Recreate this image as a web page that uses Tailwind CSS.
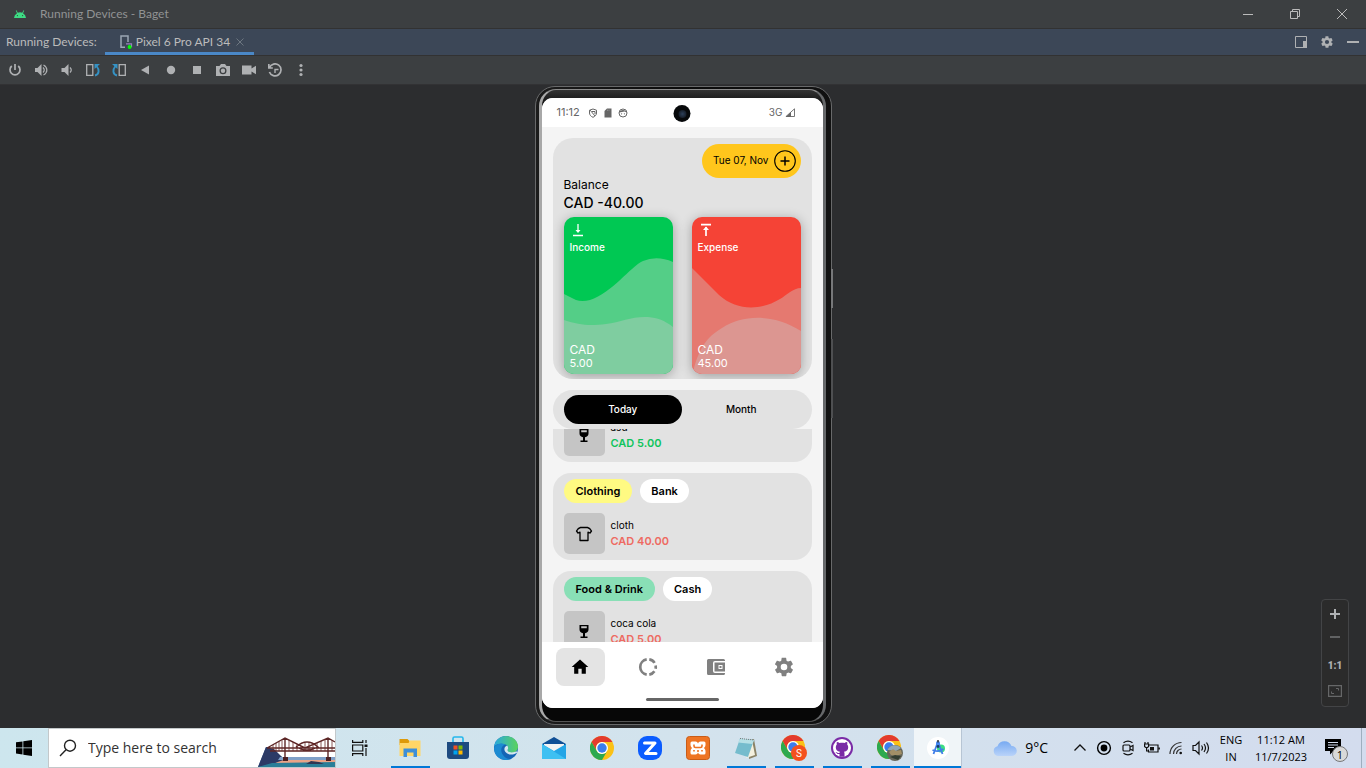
<!DOCTYPE html>
<html lang="en">
<head>
<meta charset="utf-8">
<meta name="viewport" content="width=device-width, initial-scale=1">
<title>Running Devices - Baget</title>
<script src="https://cdn.jsdelivr.net/npm/@tailwindcss/browser@4"></script>
</head>
<body class="flex h-screen flex-col overflow-hidden bg-[#2c2d2f] font-['Lato',sans-serif] text-xs text-[#bbbbbb]">

<svg class="hidden" aria-hidden="true">
  <symbol id="chrome" viewBox="0 0 24 24">
    <circle cx="12" cy="12" r="12" fill="#fbc116"/>
    <path d="M1.600 6A12 12 0 0 1 22.400 6H12a6 6 0 0 0-5.200 9z" fill="#e33b2e"/>
    <path d="M1.600 6A12 12 0 0 0 12 24l5.200-9A6 6 0 0 1 6.800 15z" fill="#2da94f"/>
    <circle cx="12" cy="12" r="6" fill="#fff"/>
    <circle cx="12" cy="12" r="4.700" fill="#3b7ded"/>
  </symbol>
  <symbol id="gear" viewBox="0 0 24 24">
    <path d="M19.400 13c0-.3.1-.6.1-1s0-.7-.1-1l2.100-1.600c.2-.2.3-.4.1-.6l-2-3.500c-.1-.2-.4-.3-.6-.2l-2.500 1c-.5-.4-1.100-.7-1.700-1l-.4-2.700c0-.2-.2-.4-.5-.4h-4c-.2 0-.5.2-.5.4l-.4 2.700c-.6.3-1.200.6-1.700 1l-2.500-1c-.2-.1-.5 0-.6.2l-2 3.500c-.1.2-.1.5.1.6L4.500 11c0 .3-.1.700-.1 1s0 .7.1 1l-2.100 1.600c-.2.2-.3.400-.1.600l2 3.500c.1.200.4.300.6.200l2.500-1c.5.400 1.100.700 1.700 1l.4 2.700c0 .2.3.4.5.4h4c.3 0 .5-.2.5-.4l.4-2.700c.6-.3 1.200-.6 1.700-1l2.500 1c.2.1.5 0 .6-.2l2-3.500c.1-.2.1-.5-.1-.6zM12 15.600a3.600 3.600 0 1 1 0-7.200 3.600 3.600 0 0 1 0 7.200z"/>
  </symbol>
  <symbol id="wine" viewBox="0 0 12 14">
    <path fill-rule="evenodd" d="M1.500 0h9v4.500c0 2-1.500 3.500-3.500 3.800V11.500h2.500V13h-7v-1.500H5V8.300c-2-.3-3.500-1.800-3.500-3.800zM3.200 1.300v2h5.600v-2z"/>
  </symbol>
</svg>

<header class="flex h-[29px] shrink-0 items-center border-b border-[#323232] bg-[#3c3f41] pr-px">
  <svg class="ml-[14px] h-3 w-3" viewBox="0 0 12 12"><path d="M0 10a6 6 0 0 1 3-4.800L1.800 2.500l.6-.3L3.800 4.800a6 6 0 0 1 4.400 0l1.400-2.600.6.300L9 5.200A6 6 0 0 1 12 10z" fill="#3ddc84"/><circle cx="3.400" cy="7.600" r=".6" fill="#31473a"/><circle cx="8.600" cy="7.600" r=".6" fill="#31473a"/></svg>
  <h1 class="ml-[14px] text-[#919394]">Running Devices - Baget</h1>
  <div class="ml-auto flex h-full">
    <button class="grid w-[47px] place-items-center" aria-label="Minimize"><svg class="h-3 w-3" viewBox="0 0 12 12"><path d="M1 6.500h10" stroke="#bbb"/></svg></button>
    <button class="grid w-[47px] place-items-center" aria-label="Restore"><svg class="h-3 w-3" viewBox="0 0 12 12" fill="none" stroke="#bbb"><path d="M1.500 3.500h7v7h-7zM3.500 3.500v-2h7v7h-2"/></svg></button>
    <button class="grid w-[47px] place-items-center" aria-label="Close"><svg class="h-3 w-3" viewBox="0 0 12 12"><path d="M1 1l10 10M11 1L1 11" stroke="#bbb"/></svg></button>
  </div>
</header>

<div class="flex h-[27px] shrink-0 items-stretch border-b border-[#323232] bg-[#3c4757]">
  <span class="self-center pl-1.5">Running Devices:</span>
  <div class="ml-2 flex items-center border-b-[3px] border-[#4a88c7] pr-2.5 pl-[14px]">
    <svg class="mt-[3px] h-[14px] w-[14px]" viewBox="0 0 14 14" fill="none"><path d="M6 12.200H2V1h7v6" stroke="#9aa7b4" stroke-width="1.500"/><path d="M7 8.800h5.500v3.500" stroke="#9b7fc0" stroke-width="1.200"/><circle cx="10.600" cy="12" r="2" fill="#0f0"/></svg>
    <a href="#" class="mt-[3px] ml-[3px]">Pixel 6 Pro API 34</a>
    <button class="mt-[3px] ml-1.5" aria-label="Close tab"><svg class="h-2 w-2" viewBox="0 0 8 8"><path d="M.5.500l7 7M7.500.500l-7 7" stroke="#6d7781"/></svg></button>
  </div>
  <div class="ml-auto flex items-center gap-[13px] pr-[7px] text-[#afb1b3]">
    <button aria-label="Dock"><svg class="h-3 w-3" viewBox="0 0 12 12"><path d="M.5.500h11v11H.5z" fill="none" stroke="currentColor"/><path d="M8 5h4v7H8z" fill="currentColor"/></svg></button>
    <button aria-label="Options"><svg class="h-[14px] w-[14px] fill-current"><use href="#gear"/></svg></button>
    <button aria-label="Hide"><svg class="h-3 w-3" viewBox="0 0 12 12"><path d="M0 5h12v2H0z" fill="currentColor"/></svg></button>
  </div>
</div>

<div class="flex h-[29px] shrink-0 items-center gap-3 border-b border-[#323234] bg-[#3c3f41] pl-2 text-[#afb1b3]" role="toolbar">
  <button aria-label="Power"><svg class="h-[14px] w-[14px]" viewBox="0 0 14 14" fill="none" stroke="currentColor" stroke-width="1.700"><path d="M7 1v6M3.800 3a5 5 0 1 0 6.400 0"/></svg></button>
  <button aria-label="Volume up"><svg class="h-[14px] w-[14px]" viewBox="0 0 14 14"><path d="M1 5h2.500l4-4v12l-4-4H1z" fill="currentColor"/><path d="M9 4.500c1.500 1.500 1.500 3.500 0 5M9.500 2c4.500 2.500 4.500 7.500 0 10" fill="none" stroke="currentColor" stroke-width="1.200"/></svg></button>
  <button aria-label="Volume down"><svg class="h-[14px] w-[14px]" viewBox="0 0 14 14"><path d="M1.500 5h3l4-4v12l-4-4h-3z" fill="currentColor"/><path d="M10 4.500c1.500 1.500 1.500 3.500 0 5" fill="none" stroke="currentColor" stroke-width="1.200"/></svg></button>
  <button aria-label="Rotate left"><svg class="h-[14px] w-[14px]" viewBox="0 0 14 14" fill="none"><path d="M.7 1.700h6.100v10.600H.7z" stroke="currentColor" stroke-width="1.300"/><path d="M9 12.500c4.500-1 4.500-6 1.500-9.500" stroke="#3592c4" stroke-width="1.900"/><path d="M8.500 1H14L8.500 6z" fill="#3592c4"/></svg></button>
  <button aria-label="Rotate right"><svg class="h-[14px] w-[14px]" viewBox="0 0 14 14" fill="none"><path d="M7.200 1.700h6.100v10.600H7.200z" stroke="currentColor" stroke-width="1.300"/><path d="M5 12.500C.5 11.500.5 6.500 3.500 3" stroke="#3592c4" stroke-width="1.900"/><path d="M5.500 1H0l5.500 5z" fill="#3592c4"/></svg></button>
  <button aria-label="Back"><svg class="h-[14px] w-[14px]" viewBox="0 0 14 14" fill="currentColor"><path d="M11 2.500v9L3 7z"/></svg></button>
  <button aria-label="Home"><svg class="h-[14px] w-[14px]" viewBox="0 0 14 14" fill="currentColor"><circle cx="7" cy="7" r="4.200"/></svg></button>
  <button aria-label="Overview"><svg class="h-[14px] w-[14px]" viewBox="0 0 14 14" fill="currentColor"><path d="M3 3h8v8H3z"/></svg></button>
  <button aria-label="Screenshot"><svg class="h-[14px] w-[14px]" viewBox="0 0 14 14"><path fill-rule="evenodd" d="M0 3h3.500L5 1h4l1.500 2H14v10H0zM7 4.200a3.500 3.500 0 1 0 0 7 3.500 3.500 0 0 0 0-7z" fill="currentColor"/><circle cx="7" cy="7.700" r="2.200" fill="currentColor"/></svg></button>
  <button aria-label="Record"><svg class="h-[14px] w-[14px]" viewBox="0 0 14 14" fill="currentColor"><path d="M0 2.500h9.500v3L14 2.800v8.400L9.500 8.500v3H0z"/></svg></button>
  <button aria-label="Snapshots"><svg class="h-[14px] w-[14px]" viewBox="0 0 14 14" fill="none" stroke="currentColor" stroke-width="1.700"><path d="M.8 1v4h4M1.500 4.500A6 6 0 1 1 1.400 9"/><path d="M7 10V6.500h3.500" stroke-width="1.400"/></svg></button>
  <button aria-label="More"><svg class="h-[14px] w-[14px]" viewBox="0 0 14 14" fill="currentColor"><circle cx="7" cy="2.500" r="1.600"/><circle cx="7" cy="7" r="1.600"/><circle cx="7" cy="11.500" r="1.600"/></svg></button>
</div>

<main class="relative flex min-h-0 flex-1 justify-center pt-px pb-[3px]">
  <!-- Phone body -->
  <div class="relative flex w-[297px] flex-col rounded-[20px] border border-[#68696a] bg-linear-to-r from-[#1c1c1c] via-[#0b0b0b] to-[#111] pt-[2px] pr-[5px] pb-[2px] pl-[3px]">
    <span class="absolute top-[182px] -right-0.5 h-[39px] w-0.5 bg-[#77787a]"></span>
    <span class="absolute top-[252px] -right-0.5 h-[79px] w-0.5 bg-[#4e4f51]"></span>
    <div class="flex min-h-0 flex-1 flex-col rounded-[17px] border-t border-r-[3px] border-b border-l-[3px] border-t-[#8a8a8a] border-r-[#66686a] border-b-[#555] border-l-[#a8a8a8] bg-linear-to-b from-[#343434] to-[#070707] to-3% pt-2 pb-[13px]">
      <div class="flex min-h-0 flex-1 flex-col overflow-hidden rounded-[11px] bg-[#f4f4f4] font-['Inter',sans-serif] text-[10px] text-black">

        <div class="relative flex h-[29px] shrink-0 items-center bg-white pr-7 pl-[15px] text-[#666]">
          <span class="w-[29px] text-[11px]">11:12</span>
          <svg class="ml-0.5 h-[10px] w-[10px]" viewBox="0 0 10 10" fill="none" stroke="#666"><path d="M5 1l3.500 1.200V5c0 2-1.500 3.500-3.500 4.300C3 8.500 1.500 7 1.500 5V2.200zM2 2l5 6M4 3.500h3V6"/></svg>
          <svg class="ml-[5px] h-[10px] w-[10px]" viewBox="0 0 10 10"><path d="M4 .5h4.500v9h-7V3z" fill="#666"/><path d="M4.500 1.500v1.500M6 1.500v1.500" stroke="#999" stroke-width=".7"/></svg>
          <svg class="ml-[5px] h-[10px] w-[10px]" viewBox="0 0 10 10"><circle cx="5" cy="5" r="4" fill="none" stroke="#666"/><path d="M1 4.500C2 1 8 1 9 4.500L6.500 3.500 4 4z" fill="#666"/><circle cx="3.600" cy="5.800" r=".6" fill="#666"/><circle cx="6.400" cy="5.800" r=".6" fill="#666"/></svg>
          <span class="absolute top-[7px] left-1/2 grid h-[17px] w-[17px] -translate-x-1/2 place-items-center rounded-full bg-[#07090b]"><span class="h-2 w-2 rounded-full bg-radial from-[#2d405a] to-[#0d1117]"></span></span>
          <span class="ml-auto">3G</span>
          <svg class="ml-0.5 h-[9px] w-[10px]" viewBox="0 0 10 9"><path d="M9.500.800v7.700H1z" fill="none" stroke="#666" stroke-width=".9"/><path d="M6 4v5H.500z" fill="#666"/></svg>
        </div>

        <section class="mx-[11px] mt-[11px] flex shrink-0 flex-col overflow-hidden rounded-[20px] bg-[#e2e2e2] px-[11px] pt-1.5 pb-[5px]">
          <button class="flex h-[34px] items-center gap-[5px] self-end rounded-full bg-[#ffc61c] pr-[5px] pl-[11px]">Tue 07, Nov
            <svg class="h-[22px] w-[22px]" viewBox="0 0 22 22" fill="none" stroke="#000"><circle cx="11" cy="11" r="10.300" stroke-width="1.100"/><path d="M11 6.500v9M6.500 11h9" stroke-width="1.500"/></svg>
          </button>
          <p class="text-[12px] leading-[13px]">Balance</p>
          <p class="mt-[3px] mb-[6px] text-[14px] leading-[17px] font-medium">CAD -40.00</p>
          <div class="grid grid-cols-2 gap-[19px] text-white">
            <article class="relative isolate flex h-[157px] flex-col overflow-hidden rounded-[10px] bg-[#00c853] px-1.5 pt-1.5 pb-[5px] shadow-[0_2px_12px_rgba(0,0,0,0.3)]">
              <svg class="absolute inset-0 -z-10 h-full w-full" viewBox="0 0 109 157" preserveAspectRatio="none"><path d="M0 77l12 6q6 2 14 0C48 76 66 50 79 44q14-6 30 1v112H0z" fill="#54ce87"/><path d="M0 103c15 5 25 6 42 4 15-2 27-8 42-7 10 1 16 3 25 10v47H0z" fill="#7fcda0"/></svg>
              <svg class="ml-0.5 h-[14px] w-[12px]" viewBox="0 0 12 14"><path d="M6 1v8M1 12.500h10" stroke="#fff" stroke-width="1.300"/><path d="M3.500 7h5L6 10z" fill="#fff"/></svg>
              <h2 class="mt-[4px] text-[10px] leading-3 font-medium">Income</h2>
              <p class="mt-auto text-[12px] leading-[14px]">CAD</p>
              <p class="text-[11px] leading-3">5.00</p>
            </article>
            <article class="relative isolate flex h-[157px] flex-col overflow-hidden rounded-[10px] bg-[#f54336] px-1.5 pt-1.5 pb-[5px] shadow-[0_2px_12px_rgba(0,0,0,0.3)]">
              <svg class="absolute inset-0 -z-10 h-full w-full" viewBox="0 0 109 157" preserveAspectRatio="none"><path d="M0 51l27 27c19 17 43 15 61 4 7-4 13-11 21-11v86H0z" fill="#e57970"/><path d="M2 151C8 130 15 120 30 111c22-14 52-14 79 3v43H0z" fill="#dc9691"/></svg>
              <svg class="ml-0.5 h-[14px] w-[12px]" viewBox="0 0 12 14"><path d="M6 4v9M1 1.700h10" stroke="#fff" stroke-width="1.700"/><path d="M3 7h6L6 3.500z" fill="#fff"/></svg>
              <h2 class="mt-[4px] text-[10px] leading-3 font-medium">Expense</h2>
              <p class="mt-auto text-[12px] leading-[14px]">CAD</p>
              <p class="text-[11px] leading-3">45.00</p>
            </article>
          </div>
        </section>

        <div class="mx-[11px] mt-[11px] grid h-[39px] shrink-0 grid-cols-2 rounded-[20px] bg-[#e2e2e2] px-[11px] py-[5px] font-medium">
          <button class="rounded-full bg-black text-white">Today</button>
          <button class="rounded-full">Month</button>
        </div>

        <div class="min-h-0 flex-1 overflow-hidden px-[11px]">
          <ul class="-mt-5 flex flex-col gap-[11px]">
            <li class="rounded-[18px] bg-[#e2e2e2] px-[11px] py-1.5">
              <div class="flex gap-1.5"><span class="grid h-[41px] w-[41px] place-items-center rounded-[5px] bg-[#c5c5c5]"><svg class="h-[14px] w-3"><use href="#wine"/></svg></span>
                <div class="pt-1"><p class="leading-4">asd</p><p class="text-[11px] leading-4 font-semibold text-[#10c45c]">CAD 5.00</p></div></div>
            </li>
            <li class="rounded-[18px] bg-[#e2e2e2] px-[11px] py-1.5">
              <div class="flex gap-2 text-[11px] font-semibold"><span class="flex h-6 items-center rounded-full bg-[#fffa82] px-3">Clothing</span><span class="flex h-6 items-center rounded-full bg-white px-[11px]">Bank</span></div>
              <div class="mt-2.5 flex gap-1.5"><span class="grid h-[41px] w-[41px] place-items-center rounded-[5px] bg-[#c5c5c5]"><svg class="h-4 w-[18px]" viewBox="0 0 18 16"><path d="M5.500 1.500h7c2 .5 3 1.700 4 3.500l-1.500 2-2-.8v8.300H5V6.200L3 7 1.500 5c1-1.800 2-3 4-3.500z" fill="none" stroke="#000" stroke-width="1.300" stroke-linejoin="round"/></svg></span>
                <div class="pt-1"><p class="leading-4">cloth</p><p class="text-[11px] leading-4 font-semibold text-[#ee6a61]">CAD 40.00</p></div></div>
            </li>
            <li class="rounded-[18px] bg-[#e2e2e2] px-[11px] py-1.5">
              <div class="flex gap-2 text-[11px] font-semibold"><span class="flex h-6 items-center rounded-full bg-[#89dfb6] px-3">Food &amp; Drink</span><span class="flex h-6 items-center rounded-full bg-white px-[11px]">Cash</span></div>
              <div class="mt-2.5 flex gap-1.5"><span class="grid h-[41px] w-[41px] place-items-center rounded-[5px] bg-[#c5c5c5]"><svg class="h-[14px] w-3"><use href="#wine"/></svg></span>
                <div class="pt-1"><p class="leading-4">coca cola</p><p class="text-[11px] leading-4 font-semibold text-[#ee6a61]">CAD 5.00</p></div></div>
            </li>
          </ul>
        </div>

        <nav class="flex h-[66px] shrink-0 flex-col items-center bg-white px-[5px] pt-1.5 pb-[7px] text-[#808080]">
          <div class="grid w-full grid-cols-4 justify-items-center">
            <button class="grid h-[38px] w-[49px] place-items-center rounded-[8px] bg-[#e4e4e4]" aria-label="Home"><svg class="h-5 w-5" viewBox="0 0 24 24"><path d="M10 20v-6h4v6h5v-8h3L12 3 2 12h3v8z" fill="#000"/></svg></button>
            <button class="grid h-[38px] w-[49px] place-items-center" aria-label="Statistics"><svg class="h-5 w-5" viewBox="0 0 20 20" fill="none" stroke="currentColor" stroke-width="2.700"><path d="M11.300 2.400a7.700 7.700 0 0 1 5.300 3.500M17.600 8.500a7.700 7.700 0 0 1 0 3.200M16.400 14.200a7.700 7.700 0 0 1-5.100 3.400M8.700 17.600A7.700 7.700 0 0 1 8.700 2.400"/></svg></button>
            <button class="grid h-[38px] w-[49px] place-items-center" aria-label="Wallet"><svg class="h-5 w-5" viewBox="0 0 20 20" fill="currentColor"><path d="M1 3.500Q1 2 2.500 2h15Q19 2 19 3.500V4H9Q7 4 7 6v8q0 2 2 2h10v.5q0 1.500-1.500 1.500h-15Q1 18 1 16.500z"/><path fill-rule="evenodd" d="M8.500 5.500H19v9H8.500zm4 2.500v4h4V8z"/><path d="M13.500 9h2v2h-2z"/></svg></button>
            <button class="grid h-[38px] w-[49px] place-items-center" aria-label="Settings"><svg class="h-[22px] w-[22px] fill-current"><use href="#gear"/></svg></button>
          </div>
          <span class="mt-auto h-[3px] w-[73px] rounded-full bg-[#666]"></span>
        </nav>
      </div>
    </div>
  </div>

  <!-- Zoom controls float over the canvas -->
  <div class="absolute right-[17px] bottom-[21px] flex h-[108px] w-7 flex-col items-center justify-around rounded-[4px] border border-[#434446] bg-[#2b2b2b] py-0.5 text-[#afb1b3]">
    <button aria-label="Zoom in"><svg class="h-[10px] w-[10px]" viewBox="0 0 10 10"><path d="M5 0v10M0 5h10" stroke="currentColor" stroke-width="2"/></svg></button>
    <button aria-label="Zoom out"><svg class="h-[10px] w-[10px]" viewBox="0 0 10 10"><path d="M0 5h10" stroke="#616263" stroke-width="2"/></svg></button>
    <button class="pt-1 font-['Roboto',sans-serif] text-[10px] leading-3 font-black">1:1</button>
    <button aria-label="Zoom to fit"><svg class="h-3 w-[14px]" viewBox="0 0 14 12" fill="none" stroke="#666768"><path d="M.6.600h12.800v10.800H.6z" stroke-width="1.200"/><path d="M3.500 8.500v-2M3.500 8.500h2.500M10.500 5.500v-2H8"/></svg></button>
  </div>
</main>

<footer class="flex h-10 shrink-0 items-stretch bg-linear-to-r from-[#cde6ee] via-[#d3e3ed] to-[#d3dcee] font-['Open_Sans',sans-serif] text-black">
  <button class="grid w-12 place-items-center" aria-label="Start"><svg class="h-4 w-4" viewBox="0 0 16 16"><path d="M0 2.300L6.500 1.400v6.100H0zM7.300 1.300L16 0v7.500H7.300zM0 8.300h6.500v6.200L0 13.600zM7.300 8.300H16V16l-8.700-1.300z"/></svg></button>
  <label class="flex w-[288px] items-center border border-[#c3c8ca] bg-white pl-2.5">
    <svg class="h-[18px] w-[18px] shrink-0" viewBox="0 0 18 18" fill="none" stroke="#222" stroke-width="1.400"><circle cx="11" cy="6.700" r="5.500"/><path d="M7 10.700L1 17"/></svg>
    <input type="text" placeholder="Type here to search" aria-label="Search" class="ml-[11px] w-0 flex-1 text-[14px] outline-none placeholder:text-[#333]">
    <svg class="h-[30px] w-[77px] shrink-0 self-end" viewBox="0 0 77 30"><path d="M0 30L8 10l8 2 10 9 51-1v10z" fill="#3f6fa5"/><path d="M9 11h68v9H24z" fill="#fff"/><path d="M0 30L8 10l8 2 12 12-12 3z" fill="#2c3a66"/><path d="M15 27c15-8 40-7 62-7v7z" fill="#e9a387"/><path d="M22 20h55v3H20z" fill="#7fa0c8"/><path d="M0 30l14-4 63-1v5z" fill="#2a7e98"/><path d="M48 27l5-3 8 1 5 2z" fill="#303653"/><path d="M9 11L27 1l20 10L70 1l7 4M9 11h68M12 14h65M27 1v22M70 1v22M38 10Q49 0 60 10Q49 16 38 10" fill="none" stroke="#5c2626" stroke-width="1.400"/><path d="M15 8v6M18 6v8M21 4v10M24 3v11M31 3v11M35 5v9M39 7v7M43 9v5M47 6v8M51 5v9M55 6v8M59 6v8M63 4v10M67 2v12M74 3v11" stroke="#6b2f2c" stroke-width=".8"/><path d="M25 20h5v4h-5zM68 20h5v4h-5z" fill="#4b2023"/></svg>
  </label>
  <button class="mr-0.5 grid w-12 place-items-center" aria-label="Task view"><svg class="h-4 w-4" viewBox="0 0 16 16" fill="none" stroke="#111" stroke-width="1.200"><path d="M.6 0v2.400h10.200V0M.6 5h10.200v6H.6zM.6 16v-2.400h10.200V16M14 0v3M14 8v8"/><path d="M12.500 4.500h3v2.500h-3z" fill="#111" stroke="none"/></svg></button>

  <button class="grid w-12 place-items-center" aria-label="File Explorer"><svg class="col-start-1 row-start-1 h-6 w-6" viewBox="0 0 24 24"><path d="M1.500 3h8l2 2v4h-10z" fill="#dd9a09"/><path d="M1.500 7h9l1.500-2.500h10.500V20h-21z" fill="#ffd667"/><path d="M5.500 21v-8.500h13.500V21h-3.500v-4.500H9V21z" fill="#3d8fd8"/></svg><span class="col-start-1 row-start-1 h-0.5 w-[39px] self-end bg-[#0078d7]"></span></button>
  <button class="grid w-12 place-items-center" aria-label="Microsoft Store"><svg class="h-6 w-6" viewBox="0 0 24 24"><path d="M1 6h22v14q0 3-3 3H4q-3 0-3-3z" fill="#1d4a80"/><path d="M7 6V2.500Q7 1 8.500 1h7Q17 1 17 2.500V6" fill="none" stroke="#25b7ec" stroke-width="1.600"/><path d="M7.500 9.500h4v4h-4z" fill="#f25022"/><path d="M12.500 9.500h4v4h-4z" fill="#7fba00"/><path d="M7.500 14.500h4v4h-4z" fill="#00a4ef"/><path d="M12.500 14.500h4v4h-4z" fill="#ffb900"/></svg></button>
  <button class="grid w-12 place-items-center" aria-label="Edge"><svg class="h-6 w-6" viewBox="0 0 24 24"><defs><linearGradient id="eg"><stop stop-color="#29a8e0"/><stop offset="1" stop-color="#5bd35b"/></linearGradient></defs><circle cx="12" cy="12" r="12" fill="#1565b5"/><path d="M0 11C1 4 6 0 12 0c7 0 12 5 12 10.500 0 4-3 6.500-6.500 6.500-3 0-5-1-4-3 1-1.500 1-4.500-2-5.500C7 7 2 8 0 11z" fill="url(#eg)"/><path d="M0 12C2 7.500 8 6.500 11 8.500 7 10 6 15 9 19c2 3 5 4.500 8 4-7 3-17-1-17-11z" fill="#1c8bd2"/><path d="M13.500 14c1-1.500.8-3.500-.5-4.500-3 1.500-3.500 4.500-1 7 3 3 8 2.500 11.500 0l-1-1.200c-3 1.700-9 1.700-9-1.300z" fill="#d5e6ef"/></svg></button>
  <button class="grid w-12 place-items-center" aria-label="Mail"><svg class="h-6 w-6" viewBox="0 0 24 24"><path d="M0 8l12-7 12 7v5H0z" fill="#0f4f96"/><path d="M2 8h20v8H2z" fill="#f3f3f3"/><path d="M0 8l12 7 12-7v15H0z" fill="#24a5e6"/><path d="M0 8l24 15H0z" fill="#3ec0f2"/></svg></button>
  <button class="grid w-12 place-items-center" aria-label="Chrome"><svg class="h-6 w-6"><use href="#chrome"/></svg></button>
  <button class="grid w-12 place-items-center" aria-label="Zoom"><svg class="h-6 w-6" viewBox="0 0 24 24"><rect width="24" height="24" rx="9" fill="#0b5cff"/><path d="M6.500 7h10.500L7.500 17.500H18" fill="none" stroke="#fff" stroke-width="3" stroke-linejoin="round" stroke-linecap="round"/></svg></button>
  <button class="grid w-12 place-items-center" aria-label="XAMPP"><svg class="h-6 w-6" viewBox="0 0 24 24"><rect x=".5" y=".5" width="23" height="23" rx="3" fill="#ee7423" stroke="#c95c17"/><path d="M6 5.500h3.500q2 0 2.500 2 .5-2 2.500-2H18q1.500 0 1.500 1.500v2q0 1.500-1.500 3 1.500 1.500 1.500 3v2q0 1.500-1.500 1.500h-3.500q-2 0-2.500-2-.5 2-2.500 2H6q-1.500 0-1.500-1.500v-2q0-1.500 1.500-3-1.500-1.500-1.500-3V7q0-1.500 1.500-1.500z" fill="#fff"/><path d="M8 8.500v1.500q0 1.500 1.500 1.500h5q1.500 0 1.500-1.500V8.500M8 15.500V14M16 15.500V14M12 14v2" fill="none" stroke="#ee7423" stroke-width="1.600"/></svg></button>
  <button class="grid w-12 place-items-center" aria-label="Notepad"><svg class="col-start-1 row-start-1 h-6 w-6" viewBox="0 0 24 24"><path d="M16 4l4-1 3 17-8 3z" fill="#8b8366"/><path d="M18 4l3 15-9 3z" fill="#f4f1df"/><path d="M6 2.500l14 1.500-6 17-13-4z" fill="#75bccd"/><path d="M6 2.500l14 1.500-1.500 4L4 6.500z" fill="#b6e0e6"/><path d="M6 2.500l14 1.500" stroke="#777" stroke-dasharray="1 1"/></svg><span class="col-start-1 row-start-1 h-0.5 w-[39px] self-end bg-[#0078d7]"></span></button>
  <button class="grid w-12 place-items-center" aria-label="Chrome, profile S"><svg class="col-start-1 row-start-1 h-[26px] w-[26px]" viewBox="0 0 26 26"><use href="#chrome" width="24" height="24"/><circle cx="18" cy="18" r="8" fill="#f4511e"/><text x="18" y="22" text-anchor="middle" font-family="Roboto, sans-serif" font-size="10" fill="#fff">S</text></svg><span class="col-start-1 row-start-1 h-0.5 w-[39px] self-end bg-[#0078d7]"></span></button>
  <button class="grid w-12 place-items-center" aria-label="GitHub Desktop"><svg class="col-start-1 row-start-1 h-6 w-6" viewBox="0 0 24 24"><circle cx="12" cy="12" r="11" fill="#7a2ba6"/><circle cx="12" cy="12" r="9" fill="#fff"/><path d="M9.500 20.700V18c-2.500.5-3-1-4-2 2 0 2 1.500 4 1 0-.6.200-1 .500-1.300-3-.5-4.200-2-4.200-4.500 0-1 .3-1.900 1-2.600-.2-.8-.2-1.700.1-2.600 1 0 1.900.5 2.600 1 1.600-.4 3.400-.4 5 0 .7-.5 1.600-1 2.600-1 .3.900.3 1.800.1 2.600.7.700 1 1.600 1 2.600 0 2.500-1.200 4-4.200 4.500.3.400.5.900.5 1.600v3.400z" fill="#7a2ba6"/></svg><span class="col-start-1 row-start-1 h-0.5 w-[39px] self-end bg-[#0078d7]"></span></button>
  <button class="grid w-12 place-items-center" aria-label="Chrome, second profile"><svg class="col-start-1 row-start-1 h-[26px] w-[26px]" viewBox="0 0 26 26"><use href="#chrome" width="24" height="24"/><circle cx="18" cy="18" r="8" fill="#67675b"/><path d="M10.500 15A8 8 0 0 1 24 13l-5 3z" fill="#91a5b5"/><path d="M12 17l4-3 3 2 5-1 1 4-6 2-5-1z" fill="#a28f67"/><path d="M13 22l5-2 6 1-3 4z" fill="#343e32"/></svg><span class="col-start-1 row-start-1 h-0.5 w-[39px] self-end bg-[#0078d7]"></span></button>
  <button class="grid w-12 place-items-center border-r border-[#b7c5d4] bg-[#f0f5f8]" aria-label="Android Studio"><svg class="col-start-1 row-start-1 h-6 w-6" viewBox="0 0 24 24"><circle cx="12" cy="12" r="11" fill="#fff"/><circle cx="15" cy="12.500" r="4" fill="#3ddc84"/><path d="M11.500 7L7.500 18M12.500 7l4 11M6.500 14q5.500 2.500 11-1" fill="none" stroke="#3f7ee8" stroke-width="1.800"/><circle cx="12" cy="7" r="2" fill="#4285f4"/><path d="M12 4v2.500" stroke="#333" stroke-width="1.500"/><circle cx="12" cy="10.500" r="1.400" fill="#183b66"/></svg><span class="col-start-1 row-start-1 h-0.5 w-full self-end bg-[#0078d7]"></span></button>

  <div class="ml-auto flex items-center pr-1">
    <button class="flex items-center gap-2 text-[14px]"><svg class="h-4 w-6" viewBox="0 0 24 16"><defs><linearGradient id="cl" x2="0" y2="1"><stop stop-color="#77aaf2"/><stop offset="1" stop-color="#b9d3f9"/></linearGradient></defs><path d="M5 16a5 5 0 0 1-.5-9.800A7.500 7.500 0 0 1 18.500 6 5 5 0 0 1 19 16z" fill="url(#cl)"/></svg>9°C</button>
    <div class="ml-6 flex items-center gap-2">
      <button aria-label="Show hidden icons"><svg class="h-4 w-4" viewBox="0 0 16 16"><path d="M2.500 10.500L8 5l5.500 5.500" fill="none" stroke="#111" stroke-width="1.300"/></svg></button>
      <button aria-label="Recording"><svg class="h-4 w-4" viewBox="0 0 16 16"><circle cx="8" cy="8" r="6.400" fill="none" stroke="#000" stroke-width="1.400"/><circle cx="8" cy="8" r="3.400"/></svg></button>
      <button aria-label="Meet Now"><svg class="h-4 w-4" viewBox="0 0 16 16" fill="none" stroke="#111" stroke-width="1.200"><rect x="3" y="5" width="7" height="6" rx="1"/><path d="M10 7l3-1.500v5L10 9M3.500 2.800q4.500-3.200 9 0M3.500 13.200q4.500 3.200 9 0"/></svg></button>
      <button aria-label="Battery"><svg class="h-4 w-4" viewBox="0 0 16 16" fill="none" stroke="#111" stroke-width="1.200"><path d="M5 5h9v7H4.500V9.500M15.300 7.500v2M1 2v2M4 2v2M.6 4h4v2.500l-1 1h-2l-1-1zM2.600 7.500v3.500h2"/><path d="M6 7h4v3.500H6z" fill="#111" stroke="none"/></svg></button>
      <button aria-label="Wi-Fi"><svg class="h-4 w-4" viewBox="0 0 16 16" fill="none" stroke="#333" stroke-width="1.200"><path d="M2 14A11.500 11.500 0 0 1 13.500 2.500M5.500 14a8 8 0 0 1 8-8M8.500 14a5 5 0 0 1 5-5"/><circle cx="12.700" cy="13" r="1.300" fill="#111" stroke="none"/></svg></button>
      <button aria-label="Volume"><svg class="h-4 w-[18px]" viewBox="0 0 18 16" fill="none" stroke="#111" stroke-width="1.200"><path d="M1 5.500h2.500L7 2v12l-3.500-3.500H1zM9.500 5.500q2 2.500 0 5M12 4q3 4 0 8M14.500 2.500q4 5.500 0 11"/></svg></button>
    </div>
    <button class="ml-[5px] w-8 text-center text-[11px] leading-[17px]">ENG<br>IN</button>
    <button class="ml-0.5 w-[64px] text-center text-[11px] leading-[17px] whitespace-nowrap">11:12 AM<br>11/7/2023</button>
    <button class="relative ml-[11px] h-6 w-6" aria-label="Notifications"><svg class="h-6 w-6" viewBox="0 0 24 24"><path d="M1 3h16v12H9.500L6 18.500V15H1z"/><path d="M4 6.500h10M4 9h10M4 11.500h6" stroke="#d3dcee"/></svg><span class="absolute top-[10px] left-2 grid h-4 w-4 place-items-center rounded-full border border-[#777] bg-[#d9d9d9] text-[11px] leading-none">1</span></button>
    <span class="ml-[13px] h-10 border-l border-[#9eafbf]"></span>
  </div>
</footer>
</body>
</html>
